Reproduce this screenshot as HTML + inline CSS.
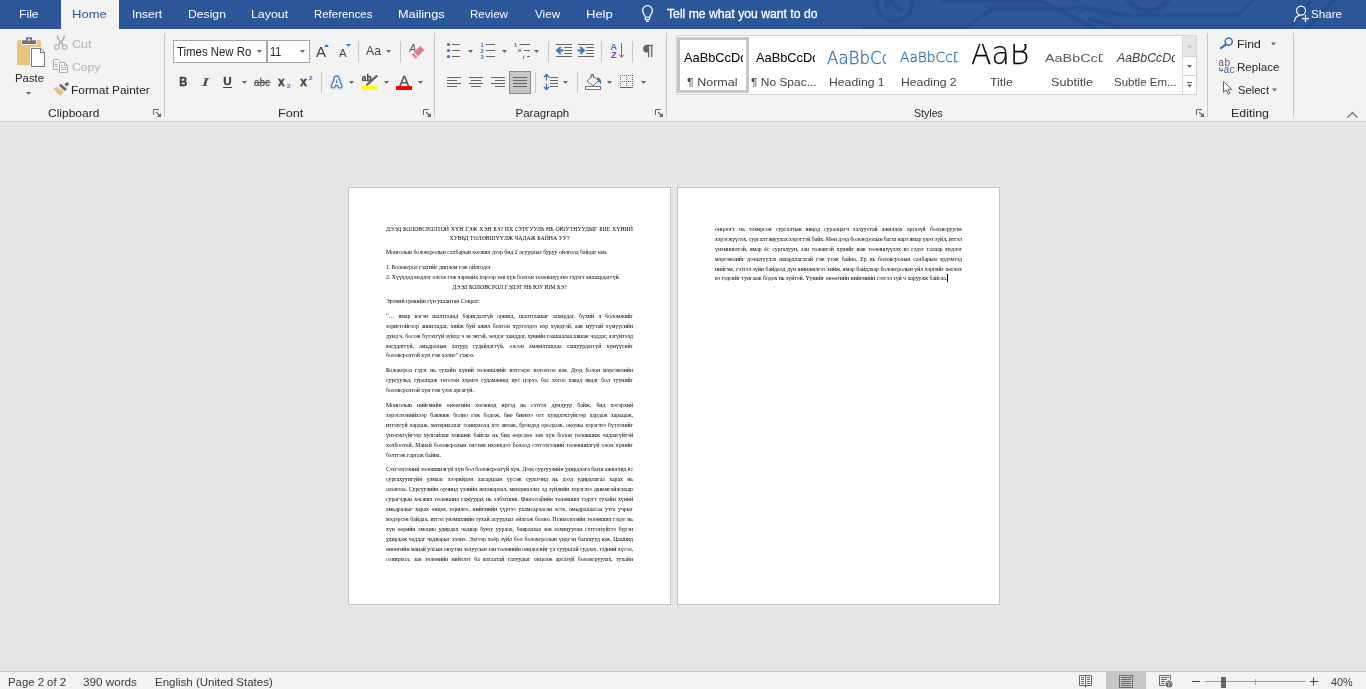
<!DOCTYPE html>
<html lang="mn"><head><meta charset="utf-8"><title>Word</title>
<style>
html,body{margin:0;padding:0}
body{width:1366px;height:689px;overflow:hidden;position:relative;background:#e6e6e6;font-family:"Liberation Sans",sans-serif}
.a{position:absolute}
.t{position:absolute;white-space:pre;transform-origin:0 50%}
.d{position:absolute;white-space:pre;font-family:"Liberation Serif",serif;font-size:5.8px;line-height:8px;color:#000}
#tabs{left:0;top:0;width:1366px;height:29px;background:#2b579a;overflow:hidden}
#hometab{left:61px;top:0;width:58px;height:29px;background:#f3f3f3}
#ribbon{left:0;top:29px;width:1366px;height:92px;background:#f3f3f3;border-bottom:1px solid #d0d0d0}
#status{left:0;top:671px;width:1366px;height:17px;background:#f3f3f3;border-top:1px solid #c6c6c6}
.page{position:absolute;top:187px;width:321px;height:416px;background:#fff;border:1px solid #c6c6c6}
.sep{position:absolute;width:1px;background:#c4c4c4}
.box{position:absolute;background:#fff;border:1px solid #ababab;box-sizing:border-box}
svg{position:absolute;overflow:visible}
</style></head>
<body>
<div class="a" id="tabs"></div>
<div class="a" id="hometab"></div>
<div class="a" id="ribbon"></div>
<div class="a" id="status"></div>
<div class="page" style="left:348px"></div>
<div class="page" style="left:677px"></div>
<div class="a" id="fg" style="left:0;top:0;width:1366px;height:689px;will-change:transform">
<svg class="a" style="left:0;top:0" width="1366" height="689" viewBox="0 0 1366 689" font-family="Liberation Sans, sans-serif">
<clipPath id="tb"><rect x="0" y="0" width="1366" height="29"/></clipPath>
<g clip-path="url(#tb)" fill="none" stroke="#264e8c" stroke-width="4" stroke-linecap="round" stroke-linejoin="round"><circle cx="894.5" cy="4" r="17.5" stroke-width="4"/><path d="M888 -2L902 12" stroke-width="5" stroke-linecap="butt"/><path d="M864 27H967L992 8.5H1077"/><circle cx="1080.5" cy="8.5" r="3" stroke-width="2.4"/><path d="M1084 8.5H1092L1104 14"/><path d="M941 0.5H1039L1094 27.5"/><circle cx="1148" cy="-13" r="23.5" stroke-width="5.5"/><path d="M1090 9L1128 15.5H1238L1254 -2"/><path d="M1090 19L1116 26.5H1291L1313 -2"/><path d="M1305 30L1336 -2"/></g>
<path d="M886.5 8V-3H897" clip-path="url(#tb)" fill="none" stroke="#264e8c" stroke-width="4.5"/>
<g fill="none" stroke="#fff" stroke-width="1.25"><path d="M645.4 17.2C645.2 15 642.6 13.6 642.6 10.6a4.9 4.9 0 0 1 9.8 0C652.4 13.6 649.8 15 649.6 17.2"/><rect x="645.4" y="17.3" width="4.2" height="2.3"/><path d="M646 21.4H649"/></g>
<g fill="none" stroke="#fff" stroke-width="1.25"><circle cx="1301" cy="10.6" r="4.5"/><path d="M1294.3 22C1294.6 18.4 1296.6 16 1299.4 15.3"/><path d="M1302 18.6H1309M1305.5 15.1V22.1" stroke-width="1.3"/></g>
<rect x="164" y="33" width="1" height="84" fill="#c6c6c6"/>
<rect x="434" y="33" width="1" height="84" fill="#c6c6c6"/>
<rect x="666" y="33" width="1" height="84" fill="#c6c6c6"/>
<rect x="1207" y="33" width="1" height="84" fill="#c6c6c6"/>
<rect x="1293" y="33" width="1" height="84" fill="#c6c6c6"/>
<rect x="358" y="41" width="1" height="21" fill="#c6c6c6"/>
<rect x="400" y="41" width="1" height="21" fill="#c6c6c6"/>
<rect x="548" y="41" width="1" height="21" fill="#c6c6c6"/>
<rect x="601" y="41" width="1" height="21" fill="#c6c6c6"/>
<rect x="632" y="41" width="1" height="21" fill="#c6c6c6"/>
<rect x="321" y="72" width="1" height="21" fill="#c6c6c6"/>
<rect x="535" y="72" width="1" height="21" fill="#c6c6c6"/>
<rect x="577" y="72" width="1" height="21" fill="#c6c6c6"/>
<path d="M153.5 115V109.5H159" fill="none" stroke="#666666" stroke-width="1"/><path d="M156 112L160 116" stroke="#666666" stroke-width="1.1"/><path d="M161 113V117H157z" fill="#666666"/>
<path d="M423.5 115V109.5H429" fill="none" stroke="#666666" stroke-width="1"/><path d="M426 112L430 116" stroke="#666666" stroke-width="1.1"/><path d="M431 113V117H427z" fill="#666666"/>
<path d="M655.5 115V109.5H661" fill="none" stroke="#666666" stroke-width="1"/><path d="M658 112L662 116" stroke="#666666" stroke-width="1.1"/><path d="M663 113V117H659z" fill="#666666"/>
<path d="M1196.5 115V109.5H1202" fill="none" stroke="#666666" stroke-width="1"/><path d="M1199 112L1203 116" stroke="#666666" stroke-width="1.1"/><path d="M1204 113V117H1200z" fill="#666666"/>
<path d="M1347.5 117.5L1352.5 112.5L1357.5 117.5" fill="none" stroke="#666666" stroke-width="1.1"/>
<rect x="17" y="40" width="24" height="25" rx="1.6" fill="#eac27a"/>
<path d="M21 40h16v5H21z" fill="#f3f3f3"/>
<path d="M22 40.3h14v3.7H22z M26 37.2h6v3.2h-6z" fill="#737373"/>
<rect x="28" y="38.8" width="2" height="2" fill="#f3f3f3"/>
<path d="M30 47h11.5l4.5 4.5V68H30z" fill="#f3f3f3"/>
<path d="M31.5 48.5h9.3l3.7 3.7V66.5H31.5z" fill="#fff" stroke="#777" stroke-width="1"/>
<path d="M40.5 48.5V52.5H44.5" fill="none" stroke="#777" stroke-width="1"/>
<path d="M26 92h5l-2.5 3z" fill="#666666"/>
<g fill="none" stroke="#b4b0b4" stroke-width="1.15"><circle cx="56.9" cy="47" r="2.3"/><circle cx="64.8" cy="47" r="2.3"/></g>
<path d="M57.1 35.6C57.5 38.8 59.2 40.6 60.85 42.2L63.6 45" fill="none" stroke="#b4b0b4" stroke-width="1.7"/>
<path d="M64.6 35.6C64.2 38.8 62.5 40.6 60.85 42.2L58.1 45" fill="none" stroke="#b4b0b4" stroke-width="1.7"/>
<g fill="#fbf7fb" stroke="#b4b0b4" stroke-width="1"><path d="M53.5 59.5H58.3L60.5 61.7V69.5H53.5z"/><path d="M59.5 62.5H64.5L67.5 65.5V72.5H59.5z"/><path d="M64.5 62.5V65.5H67.5" fill="none"/></g>
<path d="M55 62.5h2M55 64.5h3M55 66.5h3M61 65.5h2M61 67.5h5M61 69.5h5" stroke="#b4b0b4" stroke-width="1"/>
<path d="M66.9 81.9L69.2 83.9L66.6 86.6L64.4 84.4z" fill="#696969"/>
<path d="M61 83.7L67.1 89.2L64.7 90.9L58.9 85.5z" fill="#696969"/>
<path d="M57.5 86.7L64 91.8L60.2 95.9L53 88.3z" fill="#eac27a"/>
<rect x="173.5" y="40.5" width="93" height="22" fill="#fff" stroke="#a6a6a6"/>
<rect x="267.5" y="40.5" width="42" height="22" fill="#fff" stroke="#a6a6a6"/>
<path d="M257 50h5l-2.5 3z" fill="#666666"/>
<path d="M300 50h5l-2.5 3z" fill="#666666"/>
<text x="316" y="57" font-size="14.2" fill="#444444" textLength="10" lengthAdjust="spacingAndGlyphs">A</text>
<path d="M324 47h5l-2.5 -3z" fill="#3d76bb"/>
<text x="339" y="57" font-size="11" fill="#444444" textLength="7.6" lengthAdjust="spacingAndGlyphs">A</text>
<path d="M346 44h5l-2.5 3z" fill="#3d76bb"/>
<text x="366" y="54.8" font-size="12.2" fill="#444444" textLength="15" lengthAdjust="spacingAndGlyphs">Aa</text>
<path d="M386 50h5l-2.5 3z" fill="#666666"/>
<text x="409.3" y="52" font-size="11" fill="#555" font-style="italic" textLength="7" lengthAdjust="spacingAndGlyphs">A</text>
<path d="M420.3 45.9L424.4 50L418.2 56.3L414.1 52.2z" fill="#e8788e"/>
<path d="M413.3 53.1L417.4 57.2L415.7 58.7L411.7 54.7z" fill="#e8788e"/>
<text x="179.3" y="85.7" font-size="12" font-weight="bold" fill="#444444" stroke="#444444" stroke-width="0.45" textLength="8" lengthAdjust="spacingAndGlyphs">B</text>
<text x="201.6" y="85.7" font-size="13" font-style="italic" font-family="Liberation Serif, serif" fill="#444444" stroke="#444444" stroke-width="0.2" textLength="7.4" lengthAdjust="spacingAndGlyphs">I</text>
<text x="223.2" y="85.4" font-size="11.6" font-weight="bold" fill="#444444" stroke="#444444" stroke-width="0.35" textLength="8.4" lengthAdjust="spacingAndGlyphs">U</text>
<path d="M223 87.5H232" stroke="#444444" stroke-width="1"/>
<path d="M242 81h5l-2.5 3z" fill="#666666"/>
<text x="254" y="85.6" font-size="11" fill="#555" stroke="#555" stroke-width="0.3" textLength="16" lengthAdjust="spacingAndGlyphs">abc</text>
<path d="M254 82.5H270.5" stroke="#555" stroke-width="1"/>
<text x="278.1" y="85.7" font-size="12" font-weight="bold" fill="#444444" stroke="#444444" stroke-width="0.4" textLength="6.7" lengthAdjust="spacingAndGlyphs">x</text>
<text x="286.8" y="88" font-size="6" font-weight="bold" fill="#3d76bb" textLength="4" lengthAdjust="spacingAndGlyphs">2</text>
<text x="300.2" y="85.7" font-size="12" font-weight="bold" fill="#444444" stroke="#444444" stroke-width="0.4" textLength="6.7" lengthAdjust="spacingAndGlyphs">x</text>
<text x="308.8" y="80" font-size="6" font-weight="bold" fill="#3d76bb" textLength="4" lengthAdjust="spacingAndGlyphs">2</text>
<text x="331.8" y="86.5" font-size="14.4" font-weight="bold" fill="#3d76bb" stroke="#3d76bb" stroke-width="2.5" stroke-linejoin="round" textLength="9.8" lengthAdjust="spacingAndGlyphs" style="filter:drop-shadow(0 0 0.8px #6d9bd6)">A</text>
<text x="331.8" y="86.5" font-size="14.4" font-weight="bold" fill="#fff" stroke="#fff" stroke-width="0.25" stroke-linejoin="round" textLength="9.8" lengthAdjust="spacingAndGlyphs">A</text>
<path d="M349 81h5l-2.5 3z" fill="#666666"/>
<text x="361.8" y="81.3" font-size="9" font-weight="bold" fill="#444444" stroke="#444444" stroke-width="0.3" textLength="9.8" lengthAdjust="spacingAndGlyphs">ab</text>
<path d="M376.2 74.8L378.2 76.3L369.2 84.6L366.8 85.8L365.6 85.3L367 83.2z" fill="#6a6a6a"/>
<rect x="362" y="86" width="16" height="4" fill="#ffff00"/>
<path d="M384 81h5l-2.5 3z" fill="#666666"/>
<text x="399.3" y="86" font-size="14.2" fill="#555" stroke="#555" stroke-width="0.3" textLength="10" lengthAdjust="spacingAndGlyphs">A</text>
<rect x="396" y="86" width="16" height="4" fill="#ff0000"/>
<path d="M418 81h5l-2.5 3z" fill="#666666"/>
<circle cx="448.5" cy="44.5" r="1.6" fill="#3d76bb"/>
<path d="M452 44.5H460" stroke="#666666" stroke-width="1"/>
<path d="M486 44.5H495" stroke="#666666" stroke-width="1"/>
<circle cx="448.5" cy="50.5" r="1.6" fill="#3d76bb"/>
<path d="M452 50.5H460" stroke="#666666" stroke-width="1"/>
<path d="M486 50.5H495" stroke="#666666" stroke-width="1"/>
<circle cx="448.5" cy="56.5" r="1.6" fill="#3d76bb"/>
<path d="M452 56.5H460" stroke="#666666" stroke-width="1"/>
<path d="M486 56.5H495" stroke="#666666" stroke-width="1"/>
<path d="M468 50h5l-2.5 3z" fill="#666666"/>
<path d="M502 50h5l-2.5 3z" fill="#666666"/>
<path d="M534 50h5l-2.5 3z" fill="#666666"/>
<text x="480.6" y="47" font-size="5.8" font-weight="bold" fill="#3d76bb">1</text>
<text x="480.6" y="53" font-size="5.8" font-weight="bold" fill="#3d76bb">2</text>
<text x="480.6" y="59" font-size="5.8" font-weight="bold" fill="#3d76bb">3</text>
<text x="514" y="47" font-size="5.8" font-weight="bold" fill="#3d76bb">1</text>
<text x="518" y="52.4" font-size="5.6" font-weight="bold" fill="#3d76bb">a</text>
<text x="522.6" y="58.8" font-size="6" font-weight="bold" fill="#3d76bb">i</text>
<path d="M519.5 44.5H530" stroke="#666666" stroke-width="1"/>
<path d="M524 50.5H530" stroke="#666666" stroke-width="1"/>
<path d="M527 56.5H530" stroke="#666666" stroke-width="1"/>
<path d="M556 44.5H572" stroke="#666666" stroke-width="1"/>
<path d="M556 56.5H572" stroke="#666666" stroke-width="1"/>
<path d="M564.3 47.5H572" stroke="#666666" stroke-width="1"/>
<path d="M564.3 50.5H572" stroke="#666666" stroke-width="1"/>
<path d="M564.3 53.5H572" stroke="#666666" stroke-width="1"/>
<path d="M578 44.5H594" stroke="#666666" stroke-width="1"/>
<path d="M578 56.5H594" stroke="#666666" stroke-width="1"/>
<path d="M586.3 47.5H594" stroke="#666666" stroke-width="1"/>
<path d="M586.3 50.5H594" stroke="#666666" stroke-width="1"/>
<path d="M586.3 53.5H594" stroke="#666666" stroke-width="1"/>
<path d="M555.8 50.5L559.6 47h1.9L559.4 49.6H563v1.8H559.4L561.5 54h-1.9z" fill="#3d76bb" stroke="#3d76bb" stroke-width="0.4"/>
<path d="M585.2 50.5L581.4 47h-1.9L581.6 49.6H578v1.8H581.6L579.5 54h1.9z" fill="#3d76bb" stroke="#3d76bb" stroke-width="0.4"/>
<text x="610.6" y="49.7" font-size="9.2" font-weight="bold" fill="#3d76bb" textLength="6.6" lengthAdjust="spacingAndGlyphs">A</text>
<text x="610.9" y="57.9" font-size="9" font-weight="bold" fill="#8a41b5" textLength="5.8" lengthAdjust="spacingAndGlyphs">Z</text>
<path d="M621.5 43V57M619 54.3L621.5 57.3L624 54.3" fill="none" stroke="#666666" stroke-width="1"/>
<path d="M648.4 44.8H647A3.9 3.9 0 0 0 647 52.6H648.4z" fill="#666666"/><path d="M647 45.4H653.2" stroke="#666666" stroke-width="1.2" fill="none"/><path d="M648.6 45V57.2M651.7 45V57.2" stroke="#666666" stroke-width="1.3" fill="none"/>
<rect x="509.5" y="71.5" width="21" height="22" fill="#c6c6c6" stroke="#8c8c8c"/>
<path d="M447 77.5H461" stroke="#666666" stroke-width="1"/>
<path d="M469 77.5H483" stroke="#666666" stroke-width="1"/>
<path d="M491 77.5H505" stroke="#666666" stroke-width="1"/>
<path d="M513 77.5H527" stroke="#666666" stroke-width="1"/>
<path d="M550 77.5H558" stroke="#666666" stroke-width="1"/>
<path d="M447 80.5H457" stroke="#666666" stroke-width="1"/>
<path d="M471 80.5H481" stroke="#666666" stroke-width="1"/>
<path d="M495 80.5H505" stroke="#666666" stroke-width="1"/>
<path d="M513 80.5H527" stroke="#666666" stroke-width="1"/>
<path d="M550 80.5H558" stroke="#666666" stroke-width="1"/>
<path d="M447 83.5H461" stroke="#666666" stroke-width="1"/>
<path d="M469 83.5H483" stroke="#666666" stroke-width="1"/>
<path d="M491 83.5H505" stroke="#666666" stroke-width="1"/>
<path d="M513 83.5H527" stroke="#666666" stroke-width="1"/>
<path d="M550 83.5H558" stroke="#666666" stroke-width="1"/>
<path d="M447 86.5H457" stroke="#666666" stroke-width="1"/>
<path d="M471 86.5H481" stroke="#666666" stroke-width="1"/>
<path d="M495 86.5H505" stroke="#666666" stroke-width="1"/>
<path d="M513 86.5H527" stroke="#666666" stroke-width="1"/>
<path d="M550 86.5H558" stroke="#666666" stroke-width="1"/>
<path d="M546.5 74.6V80.5M543.9 77.3L546.5 74.5L549.1 77.3M546.5 83.5V89.4M543.9 86.7L546.5 89.5L549.1 86.7" fill="none" stroke="#3d76bb" stroke-width="1.3"/>
<path d="M563 81h5l-2.5 3z" fill="#666666"/>
<path d="M596.6 77.6C600.2 77.4 602 80.2 600.8 84.4C599.8 82.4 599.2 81.8 597.4 81z" fill="#3d76bb"/>
<path d="M592.6 75.6L598.6 80.8L593 86L587.2 81.2z" fill="#fff" stroke="#666666" stroke-width="1"/>
<path d="M591 78V74.5h2.4V78" fill="none" stroke="#666666" stroke-width="1"/>
<rect x="585.5" y="86.5" width="15" height="3" fill="#fff" stroke="#777"/>
<path d="M607 81h5l-2.5 3z" fill="#666666"/>
<path d="M620 75h1v1h-1zM620 77h1v1h-1zM620 79h1v1h-1zM620 81h1v1h-1zM620 83h1v1h-1zM620 85h1v1h-1zM622 75h1v1h-1zM622 81h1v1h-1zM624 75h1v1h-1zM624 81h1v1h-1zM626 75h1v1h-1zM626 77h1v1h-1zM626 79h1v1h-1zM626 81h1v1h-1zM626 83h1v1h-1zM626 85h1v1h-1zM628 75h1v1h-1zM628 81h1v1h-1zM630 75h1v1h-1zM630 81h1v1h-1zM632 75h1v1h-1zM632 77h1v1h-1zM632 79h1v1h-1zM632 81h1v1h-1zM632 83h1v1h-1zM632 85h1v1h-1z" fill="#666666"/>
<path d="M620 87.5H633" stroke="#666666" stroke-width="1"/>
<path d="M641 81h5l-2.5 3z" fill="#666666"/>
<rect x="676.5" y="35.5" width="520" height="59" fill="#fff" stroke="#d6d6d6"/>
<rect x="678.5" y="38.5" width="69" height="53" fill="none" stroke="#c6c6c6" stroke-width="3"/>
<rect x="1182.5" y="35.5" width="14" height="59" fill="#fff" stroke="#d6d6d6"/>
<rect x="1183" y="36" width="13" height="20" fill="#e6e6e6"/>
<path d="M1182.5 56.5h14M1182.5 75.5h14" stroke="#d6d6d6"/>
<path d="M1187 47.5h5l-2.5 -3z" fill="#c0c0c0"/>
<path d="M1187 65h5l-2.5 3z" fill="#666666"/>
<path d="M1187 82.5H1192" stroke="#666666" stroke-width="1"/>
<path d="M1187 84.5h5l-2.5 3z" fill="#666666"/>
<circle cx="1228.7" cy="41.6" r="3.6" fill="none" stroke="#3d76bb" stroke-width="1.5"/><path d="M1226 44.3L1220.8 48.2" stroke="#3d76bb" stroke-width="2.2" stroke-linecap="round"/>
<path d="M1271 42.5h5l-2.5 3z" fill="#666666"/>
<text x="1218.6" y="65.8" font-size="10.4" fill="#555" textLength="5.4" lengthAdjust="spacingAndGlyphs">a</text>
<text x="1224.4" y="65.8" font-size="10.4" fill="#8a41b5" textLength="5.6" lengthAdjust="spacingAndGlyphs">b</text>
<text x="1223.8" y="72.7" font-size="10.4" fill="#555" textLength="5.4" lengthAdjust="spacingAndGlyphs">a</text>
<text x="1229.6" y="72.7" font-size="10.4" fill="#3d76bb" textLength="5.2" lengthAdjust="spacingAndGlyphs">c</text>
<path d="M1219.6 67.2V70.3H1222.6M1221.2 68.8L1222.8 70.3L1221.2 71.8" fill="none" stroke="#3d76bb" stroke-width="1"/>
<path d="M1223.5 81.5V92.3L1226.3 89.9L1228.2 94.3L1229.9 93.5L1228 89.3H1231.6z" fill="#fff" stroke="#666666" stroke-width="1" stroke-linejoin="round"/>
<path d="M1272 88.5h5l-2.5 3z" fill="#666666"/>
<rect x="1106" y="672" width="40" height="17" fill="#c6c6c6"/>
<path d="M1079.5 675.5H1091.5V685.5H1079.5z M1085.5 675.5V686" fill="none" stroke="#6a6a6a" stroke-width="1"/>
<path d="M1084 685.5h3l-1.5 2.2z" fill="#6a6a6a"/>
<path d="M1081 677.5h3M1081 679.5h3M1081 681.5h3M1081 683.5h3M1087 677.5h3M1087 679.5h3M1087 681.5h3M1087 683.5h3" stroke="#6a6a6a" stroke-width="1"/>
<rect x="1119.5" y="675.5" width="13" height="12" fill="none" stroke="#6a6a6a"/>
<path d="M1121 677.5h10M1121 679.5h10M1121 681.5h10M1121 683.5h10M1121 685.5h10" stroke="#6a6a6a" stroke-width="1"/>
<path d="M1165 685.5H1159.5V675.5H1170.5V680" fill="none" stroke="#6a6a6a"/>
<path d="M1161 677.5h8M1161 679.5h6M1161 681.5h4M1161 683.5h3" stroke="#6a6a6a" stroke-width="1"/>
<circle cx="1169" cy="684" r="4.1" fill="#f3f3f3"/>
<circle cx="1169" cy="684" r="3.5" fill="#6a6a6a"/>
<path d="M1166.6 682.6C1167.8 681.6 1169 682.2 1169.2 683.4C1169.4 684.6 1168.4 685.2 1168.8 686.6M1170.4 681.4C1170.6 682.4 1171.2 682.8 1171.8 683.4" fill="none" stroke="#e8e8e8" stroke-width="1"/>
<path d="M1192 681.5H1200" stroke="#444" stroke-width="1"/>
<path d="M1205 681.5H1305" stroke="#9c9c9c" stroke-width="1"/>
<rect x="1255" y="679" width="1" height="6" fill="#a8a8a8"/>
<rect x="1221" y="677" width="5" height="11" fill="#666"/>
<path d="M1310 681.5h8M1313.5 677.5v8" stroke="#444" stroke-width="1"/>
</svg>
<span class="t" style="left:18.94px;top:6.02px;font-size:11.5px;line-height:16px;color:#ffffff;transform:scaleX(1.0588);">File</span>
<span class="t" style="left:71.87px;top:6.02px;font-size:11.5px;line-height:16px;color:#2b579a;transform:scaleX(1.1330);">Home</span>
<span class="t" style="left:131.95px;top:6.02px;font-size:11.5px;line-height:16px;color:#ffffff;transform:scaleX(1.0498);">Insert</span>
<span class="t" style="left:187.94px;top:6.02px;font-size:11.5px;line-height:16px;color:#ffffff;transform:scaleX(1.0588);">Design</span>
<span class="t" style="left:250.93px;top:6.02px;font-size:11.5px;line-height:16px;color:#ffffff;transform:scaleX(1.0746);">Layout</span>
<span class="t" style="left:314.01px;top:6.02px;font-size:11.5px;line-height:16px;color:#ffffff;transform:scaleX(0.9935);">References</span>
<span class="t" style="left:397.90px;top:6.02px;font-size:11.5px;line-height:16px;color:#ffffff;transform:scaleX(1.1043);">Mailings</span>
<span class="t" style="left:469.99px;top:6.02px;font-size:11.5px;line-height:16px;color:#ffffff;transform:scaleX(1.0068);">Review</span>
<span class="t" style="left:534.87px;top:6.02px;font-size:11.5px;line-height:16px;color:#ffffff;transform:scaleX(1.0152);">View</span>
<span class="t" style="left:585.87px;top:6.02px;font-size:11.5px;line-height:16px;color:#ffffff;transform:scaleX(1.1299);">Help</span>
<span class="t" style="left:666.65px;top:4.50px;font-size:13px;line-height:18px;color:#ffffff;transform:scaleX(0.9379);-webkit-text-stroke:0.3px #fff">Tell me what you want to do</span>
<span class="t" style="left:1311.49px;top:6.02px;font-size:11.5px;line-height:16px;color:#ffffff;transform:scaleX(1.0127);">Share</span>
<span class="t" style="left:14.51px;top:70.02px;font-size:11.5px;line-height:16px;color:#262626;transform:scaleX(0.9865);">Paste</span>
<span class="t" style="left:71.82px;top:36.02px;font-size:11.5px;line-height:16px;color:#b3b3b3;transform:scaleX(1.0803);">Cut</span>
<span class="t" style="left:71.84px;top:59.02px;font-size:11.5px;line-height:16px;color:#b3b3b3;transform:scaleX(1.0526);">Copy</span>
<span class="t" style="left:71.46px;top:82.02px;font-size:11.5px;line-height:16px;color:#262626;transform:scaleX(1.0351);">Format Painter</span>
<span class="t" style="left:47.85px;top:105.02px;font-size:11.5px;line-height:16px;color:#262626;transform:scaleX(1.0444);">Clipboard</span>
<span class="t" style="left:277.90px;top:105.02px;font-size:11.5px;line-height:16px;color:#262626;transform:scaleX(1.0971);">Font</span>
<span class="t" style="left:515.50px;top:105.02px;font-size:11.5px;line-height:16px;color:#262626;transform:scaleX(1.0000);">Paragraph</span>
<span class="t" style="left:913.54px;top:105.02px;font-size:11.5px;line-height:16px;color:#262626;transform:scaleX(0.9218);">Styles</span>
<span class="t" style="left:1230.92px;top:105.02px;font-size:11.5px;line-height:16px;color:#262626;transform:scaleX(1.0787);">Editing</span>
<span class="t" style="left:176.77px;top:43.64px;font-size:12.3px;line-height:17px;color:#262626;transform:scaleX(0.9272);">Times New Ro</span>
<span class="t" style="left:270.12px;top:43.64px;font-size:12.3px;line-height:17px;color:#262626;transform:scaleX(0.8809);">11</span>
<span class="t" style="left:1236.93px;top:36.02px;font-size:11.5px;line-height:16px;color:#262626;transform:scaleX(1.0667);">Find</span>
<span class="t" style="left:1236.99px;top:59.02px;font-size:11.5px;line-height:16px;color:#262626;transform:scaleX(1.0061);">Replace</span>
<span class="t" style="left:1237.51px;top:82.02px;font-size:11.5px;line-height:16px;color:#262626;transform:scaleX(0.9721);">Select</span>
<span class="t" style="left:687.46px;top:74.02px;font-size:11.5px;line-height:16px;color:#444444;transform:scaleX(1.0859);">¶ Normal</span>
<span class="t" style="left:751.48px;top:74.02px;font-size:11.5px;line-height:16px;color:#444444;transform:scaleX(1.0407);">¶ No Spac...</span>
<span class="t" style="left:828.94px;top:74.02px;font-size:11.5px;line-height:16px;color:#444444;transform:scaleX(1.0614);">Heading 1</span>
<span class="t" style="left:900.94px;top:74.02px;font-size:11.5px;line-height:16px;color:#444444;transform:scaleX(1.0614);">Heading 2</span>
<span class="t" style="left:989.73px;top:74.02px;font-size:11.5px;line-height:16px;color:#444444;transform:scaleX(1.0732);">Title</span>
<span class="t" style="left:1051.45px;top:74.02px;font-size:11.5px;line-height:16px;color:#444444;transform:scaleX(1.0970);">Subtitle</span>
<span class="t" style="left:1113.50px;top:74.02px;font-size:11.5px;line-height:16px;color:#444444;transform:scaleX(0.9980);">Subtle Em...</span>
<div class="a" style="left:680px;top:40px;width:62.5px;height:30px;overflow:hidden"><span class="t" style="left:4.00px;top:9.13px;font-size:12.6px;line-height:18px;color:#000;transform:scaleX(1.0163);">AaBbCcDd</span></div>
<div class="a" style="left:752px;top:40px;width:62.5px;height:30px;overflow:hidden"><span class="t" style="left:4.00px;top:9.13px;font-size:12.6px;line-height:18px;color:#000;transform:scaleX(1.0163);">AaBbCcDd</span></div>
<div class="a" style="left:823px;top:38px;width:63px;height:34px;overflow:hidden"><span class="t" style="left:4.41px;top:6.94px;font-size:17.8px;line-height:25px;color:#2e74b5;transform:scaleX(0.9365);font-family:'DejaVu Sans Light', 'DejaVu Sans', sans-serif;-webkit-text-stroke:0.35px #2e74b5">AaBbCcD</span></div>
<div class="a" style="left:896px;top:38px;width:61.5px;height:34px;overflow:hidden"><span class="t" style="left:3.54px;top:8.08px;font-size:14.8px;line-height:21px;color:#2e74b5;transform:scaleX(0.9287);font-family:'DejaVu Sans Light', 'DejaVu Sans', sans-serif;-webkit-text-stroke:0.35px #2e74b5">AaBbCcDd</span></div>
<div class="a" style="left:967px;top:44px;width:63.5px;height:28px;overflow:hidden"><span class="t" style="left:3.75px;top:-12.90px;font-size:31.5px;line-height:44px;color:#000;transform:scaleX(0.9473);font-family:'DejaVu Sans Light', 'DejaVu Sans', sans-serif;-webkit-text-stroke:0.25px #000">AaB</span></div>
<div class="a" style="left:1041px;top:40px;width:61.5px;height:30px;overflow:hidden"><span class="t" style="left:3.85px;top:10.48px;font-size:11.6px;line-height:16px;color:#5a5a5a;transform:scaleX(1.2389);">AaBbCcDd</span></div>
<div class="a" style="left:1112px;top:40px;width:62.5px;height:30px;overflow:hidden"><span class="t" style="left:4.61px;top:9.13px;font-size:12.6px;line-height:18px;color:#404040;transform:scaleX(0.9802);font-style:italic">AaBbCcDd</span></div>
<span class="t" style="left:7.51px;top:674.02px;font-size:11.5px;line-height:16px;color:#3a3a3a;transform:scaleX(0.9869);">Page 2 of 2</span>
<span class="t" style="left:83.49px;top:674.02px;font-size:11.5px;line-height:16px;color:#3a3a3a;transform:scaleX(1.0168);">390 words</span>
<span class="t" style="left:155.00px;top:674.02px;font-size:11.5px;line-height:16px;color:#3a3a3a;transform:scaleX(1.0011);">English (United States)</span>
<span class="t" style="left:1330.77px;top:674.02px;font-size:11.5px;line-height:16px;color:#3a3a3a;transform:scaleX(0.9385);">40%</span>
<div class="d" style="top:224.87px;left:386px;word-spacing:0.371px;">ДЭЭД БОЛОВСРОЛТОЙ ХҮН ГЭЖ ХЭН БЭ? ИХ СУРГУУЛЬ НЬ ОЮУТНУУДЫГ БИЕ ХҮНИЙ</div>
<div class="d" style="top:234.07px;left:449.53px;">ХУВЬД ТӨЛӨВШҮҮЛЖ ЧАДАЖ БАЙНА УУ?</div>
<div class="d" style="top:248.17px;left:386px;">Монголын боловсролын салбарын хөгжил дээр бид 2 асуудлыг буруу ойлгоод байдаг юм.</div>
<div class="d" style="top:262.77px;left:386px;">1. Боловсрол гэдгийг диплом гэж ойлгодог</div>
<div class="d" style="top:273.07px;left:386px;">2. Хүүхдэд мэдлэг олгох гэж чармайх хэрээр зөв хүн болгон төлөвшүүлнэ гэдэгт анхаардаггүй.</div>
<div class="d" style="top:283.27px;left:452.27px;">ДЭЭД БОЛОВСРОЛ ГЭДЭГ НЬ ЮУ ЮМ БЭ?</div>
<div class="d" style="top:297.27px;left:386px;">Эртний грекийн гүн ухаантан Сократ:</div>
<div class="d" style="top:312.37px;left:386px;word-spacing:2.716px;">“… ямар нэгэн шалтгаанд баригдалгүй оршид, шалтгааныг захирдаг, бүхий л боломжийг</div>
<div class="d" style="top:322.17px;left:386px;word-spacing:1.179px;">зоригтойгоор ашигладаг, хийж буй ажил болгон хүртэлдээ нэр хүндтэй, аав муутай хүмүүсийн</div>
<div class="d" style="top:332.37px;left:386px;word-spacing:0.023px;">дунд ч, босож бүтэхгүй зүйлд ч эв эвтэй, эелдэг ханддаг, хувийн таашаалаа хянаж чаддаг, азгүйтэлд</div>
<div class="d" style="top:342.17px;left:386px;word-spacing:3.770px;">яагддаггүй, амьдралын хатууд гудайдаггүй, олсон амжилтандаа ташуурдаггүй хүмүүсийг</div>
<div class="d" style="top:351.27px;left:386px;">боловсролтой хүн гэж хэлнэ” гэжээ.</div>
<div class="d" style="top:366.27px;left:386px;word-spacing:1.474px;">Боловсрол гэдэг нь тухайн хүний төлөвшлийг илтгэдэг нотолгоо юм. Дээд болон мэргэжлийн</div>
<div class="d" style="top:376.37px;left:386px;word-spacing:1.513px;">сургуульд суралцаж төгссөн хэрнээ гудамжинд нус цэрээ, бас хогоо хаяад явдаг бол түүнийг</div>
<div class="d" style="top:385.87px;left:386px;">боловсролтой хүн гэж үзэх аргагүй.</div>
<div class="d" style="top:400.87px;left:386px;word-spacing:3.663px;">Монголын нийгмийн өнөөгийн хөгжилд иргэд нь сэтгэл дундуур байж, бид хэтэрхий</div>
<div class="d" style="top:411.17px;left:386px;word-spacing:2.077px;">хэрэглээнийхээр баяжиж болно гэж бодож, бие биенээ огт хүндлэхгүйгээр хардаж харьцаж,</div>
<div class="d" style="top:421.37px;left:386px;word-spacing:0.641px;">итгэхгүй хардаж, материаллаг сонирхолд хэт автаж, брэндэд оролдож, оюуны хэрэглээ бүтээлийг</div>
<div class="d" style="top:431.37px;left:386px;word-spacing:1.216px;">үнэлэхгүйгээр хулгайлан хэвшиж байгаа нь бид өөрсдөө зөв хүн болон төлөвшиж чадаагүйтэй</div>
<div class="d" style="top:441.37px;left:386px;word-spacing:0.812px;">холбоотой. Манай боловсролын систем ихэнхдээ болоод сэтгэлгээний төлөвшилгүй олон хүнийг</div>
<div class="d" style="top:450.57px;left:386px;">бэлтгэж гаргаж байна.</div>
<div class="d" style="top:465.17px;left:386px;word-spacing:-0.053px;">Сэтгэлгээний төлөвшилгүй хүн бол боловсролгүй хүн. Дээд сургуулийн удирдлага багш ажилчид ёс</div>
<div class="d" style="top:474.97px;left:386px;word-spacing:2.889px;">сургахуунгүйн улмаас хээрийдэн хагарцаан үүсэж сурагчид нь дээд удирдлагаа харах нь</div>
<div class="d" style="top:485.07px;left:386px;word-spacing:0.425px;">олонтаа. Сургуулийн орчинд үзлийн ялгаварлал, материаллаг эд зүйлийн хэрэглээ давамгайлснаар</div>
<div class="d" style="top:495.37px;left:386px;word-spacing:0.672px;">сурагчдын хөгжил төлөвшил гажуудах нь элбэгшив. Философийн төлөвшил гэдэгт тухайн хүний</div>
<div class="d" style="top:505.47px;left:386px;word-spacing:1.170px;">амьдралыг харах өнцөг, зорилго, нийгмийн үүргээ ухамсарласан эсэх, амьдралаасаа утга учрыг</div>
<div class="d" style="top:515.37px;left:386px;word-spacing:0.165px;">мэдэрсэн байдал, итгэл үнэмшлийн тухай асуудлыг ойлгож болно. Психологийн төлөвшил гэдэг нь</div>
<div class="d" style="top:525.47px;left:386px;word-spacing:1.121px;">хүн өөрийн эмоцио удирдах чадвар буюу уурлах, баярлахаа зөв зохицуулан сэтгэлзүйгээ бүрэн</div>
<div class="d" style="top:535.37px;left:386px;word-spacing:0.480px;">удирдаж чаддаг чадварыг хэлнэ. Эдгээр хоёр зүйл бол боловсролын үндсэн баганууд юм. Цаашид</div>
<div class="d" style="top:545.47px;left:386px;word-spacing:-0.033px;">өнөөгийн манай улсын оюутан залуусын зан төлөвийн онцлогийг үл суурьтай судлах, тэдний хүсэл,</div>
<div class="d" style="top:555.17px;left:386px;word-spacing:1.839px;">сонирхол, зан төлөвийн нийтлэг ба ялгаатай талуудыг онцолж аргазүй боловсруулах, тухайн</div>
<div class="d" style="top:225.17px;left:715px;word-spacing:2.776px;">онцлогт нь тохирсон сургалтын явцад суралцагч залуустай ажиллах аргазүй боловсруулж</div>
<div class="d" style="top:235.27px;left:715px;word-spacing:-0.238px;">хэрэгжүүлэх, сургалт явуулах хэрэгтэй байх. Мөн дээд боловсролын багш нарт ямар үнэт зүйл, итгэл</div>
<div class="d" style="top:245.17px;left:715px;word-spacing:1.212px;">үнэмшилтэй, ямар ёс сургахуун, зан төлөвтэй хүнийг яаж төлөвшүүлэх вэ гэдэг талаар мэдлэг</div>
<div class="d" style="top:254.87px;left:715px;word-spacing:1.364px;">мэргэжлийг дээшлүүлэх шаардлагатай гэж үзэж байна. Ер нь боловсролын салбарын эрдэмтэд</div>
<div class="d" style="top:264.77px;left:715px;word-spacing:0.060px;">нийгэм, сэтгэл зүйн байдалд дүн шинжилгээ хийж, ямар байдлаар боловсролын үйл хэргийг хөглөх</div>
<div class="d" style="top:274.37px;left:715px;">вэ гэдгийг тунгааж бодох нь зүйтэй. Үүнийг өнөөгийн нийгмийн сэтгэл зүй ч харуулж байгаа.</div>
</div>
<div class="a" style="left:947px;top:274px;width:1px;height:8px;background:#000"></div>
</body></html>
